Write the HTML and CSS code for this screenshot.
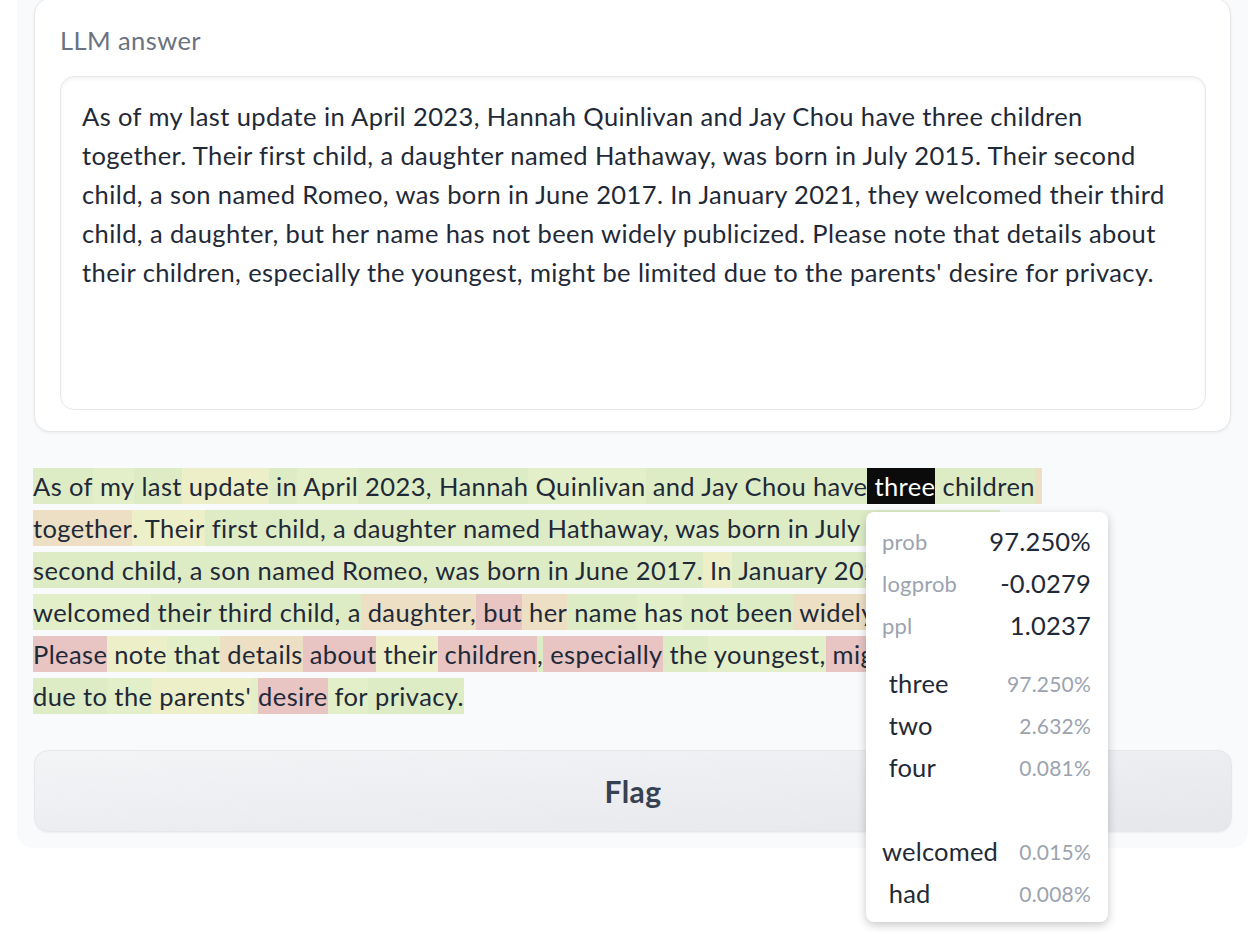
FILE: index.html
```html
<!DOCTYPE html>
<html>
<head>
<meta charset="utf-8">
<link rel="stylesheet" href="styles.css">
</head>
<body>
<div class="panel">
  <div class="card">
    <div class="label">LLM answer</div>
    <div class="textbox">As of my last update in April 2023, Hannah Quinlivan and Jay Chou have three children
together. Their first child, a daughter named Hathaway, was born in July 2015. Their second
child, a son named Romeo, was born in June 2017. In January 2021, they welcomed their third
child, a daughter, but her name has not been widely publicized. Please note that details about
their children, especially the youngest, might be limited due to the parents' desire for privacy.</div>
  </div>
  <div class="hl">
    <div class="row"><span class="g">As</span><span class="g"> of</span><span class="g2"> my</span><span class="g"> last</span><span class="y"> update</span><span class="g"> in</span><span class="g2"> April</span><span class="g"> 2023,</span><span class="g"> Hannah</span><span class="g2"> Quinlivan</span><span class="g"> and Jay Chou have</span><span class="k"> three</span><span class="g"> children</span><span class="t"> </span></div>
    <div class="row"><span class="t">together</span><span class="y">. Their</span><span class="g"> first child, a daughter named Hathaway, was born in July 2015. Their</span></div>
    <div class="row"><span class="g">second child, a son named Romeo, was born in June 2017.</span><span class="y"> In</span><span class="g"> January 2021, they</span></div>
    <div class="row"><span class="g2">welcomed</span><span class="g"> their third child, a</span><span class="t"> daughter,</span><span class="r"> but</span><span class="t"> her</span><span class="g"> name</span><span class="g2"> has</span><span class="g"> not been</span><span class="t"> widely</span><span class="g"> publicized.</span></div>
    <div class="row"><span class="r">Please</span><span class="y"> note</span><span class="g2"> that</span><span class="t"> details</span><span class="r"> about</span><span class="y"> their</span><span class="r"> children</span><span class="g">,</span><span class="r"> especially</span><span class="g"> the</span><span class="g2"> youngest,</span><span class="r"> might</span><span class="g"> be limited</span></div>
    <div class="row"><span class="g">due to</span><span class="g2"> the</span><span class="y"> parents'</span><span class="g2"> </span><span class="r">desire</span><span class="g2"> for</span><span class="g"> privacy.</span></div>
  </div>
  <button class="flag">Flag</button>
</div>

<div class="tip">
  <div class="stat"><span class="k1">prob</span><span class="v">97.250%</span></div>
  <div class="stat"><span class="k1">logprob</span><span class="v">-0.0279</span></div>
  <div class="stat"><span class="k1">ppl</span><span class="v">1.0237</span></div>
  <div class="tops">
    <div class="stat"><span class="tok"> three</span><span class="p">97.250%</span></div>
    <div class="stat"><span class="tok"> two</span><span class="p">2.632%</span></div>
    <div class="stat"><span class="tok"> four</span><span class="p">0.081%</span></div>
    <div class="stat"><span class="tok"> </span><span class="p"></span></div>
    <div class="stat"><span class="tok">welcomed</span><span class="p">0.015%</span></div>
    <div class="stat"><span class="tok"> had</span><span class="p">0.008%</span></div>
  </div>
</div>
</body>
</html>
```

FILE: styles.css
```css
html, body {
  margin: 0;
  padding: 0;
  background: #ffffff;
}
body {
  font-family: Lato, "Liberation Sans", sans-serif;
  font-size: 25.5px;
  letter-spacing: 0.4px;
  color: #1f2937;
  position: relative;
  height: 934px;
  overflow: hidden;
}
.panel {
  margin-left: 17px;
  margin-top: -20px;
  width: 1231px;
  box-sizing: border-box;
  background: #f9fafb;
  border-radius: 0 0 16px 16px;
  padding: 0 16px 16px 17px;
}
.card {
  margin-top: 18px;
  background: #ffffff;
  border: 1px solid #e5e7eb;
  border-radius: 16px;
  box-shadow: 0 1px 3px rgba(0,0,0,0.06);
  padding: 23px 24px 21px 25px;
  width: 1197px;
  box-sizing: border-box;
}
.label {
  color: #6b7280;
  line-height: 36px;
  height: 36px;
  margin-bottom: 18px;
}
.textbox {
  border: 1px solid #e5e7eb;
  border-radius: 14px;
  box-shadow: inset 0 2px 4px rgba(0,0,0,0.05);
  height: 334px;
  box-sizing: border-box;
  padding: 20px 21px;
  line-height: 39px;
  white-space: pre-line;
}
.hl {
  margin-top: 36px;
  margin-left: -1px;
}
.row {
  display: flex;
  height: 36px;
  margin-bottom: 6px;
  white-space: pre;
}
.row:last-child {
  margin-bottom: 0;
}
.row span {
  line-height: 36px;
}
.g { background: #deecc6; }
.g2 { background: #e3efc8; }
.y { background: #ecefc8; }
.t { background: #ecdfc4; }
.r { background: #e8c4c3; }
.k { background: #0b0b0b; color: #ffffff; }
.flag {
  display: block;
  margin-top: 36px;
  width: 100%;
  height: 82px;
  border: 1px solid #e5e7eb;
  border-radius: 14px;
  background: linear-gradient(to bottom right, #f3f4f6, #e5e7eb);
  box-shadow: 0 1px 2px rgba(0,0,0,0.05);
  font-family: Lato, "Liberation Sans", sans-serif;
  font-weight: 700;
  font-size: 30px;
  letter-spacing: 0.4px;
  color: #374151;
  padding: 0;
}
.tip {
  position: absolute;
  left: 866px;
  top: 512px;
  width: 242px;
  height: 410px;
  box-sizing: border-box;
  background: #ffffff;
  border-radius: 8px;
  box-shadow: 0 3px 10px rgba(0,0,0,0.22);
  padding: 8px 17px 7px 16px;
  letter-spacing: 0.2px;
}
.stat {
  display: flex;
  justify-content: space-between;
  align-items: center;
  height: 42px;
}
.k1 {
  color: #9ca3af;
  font-size: 22px;
}
.v {
  color: #1f2937;
}
.tops {
  margin-top: 16px;
}
.tok {
  white-space: pre;
  color: #1f2937;
}
.p {
  color: #9ca3af;
  font-size: 21px;
}
```
